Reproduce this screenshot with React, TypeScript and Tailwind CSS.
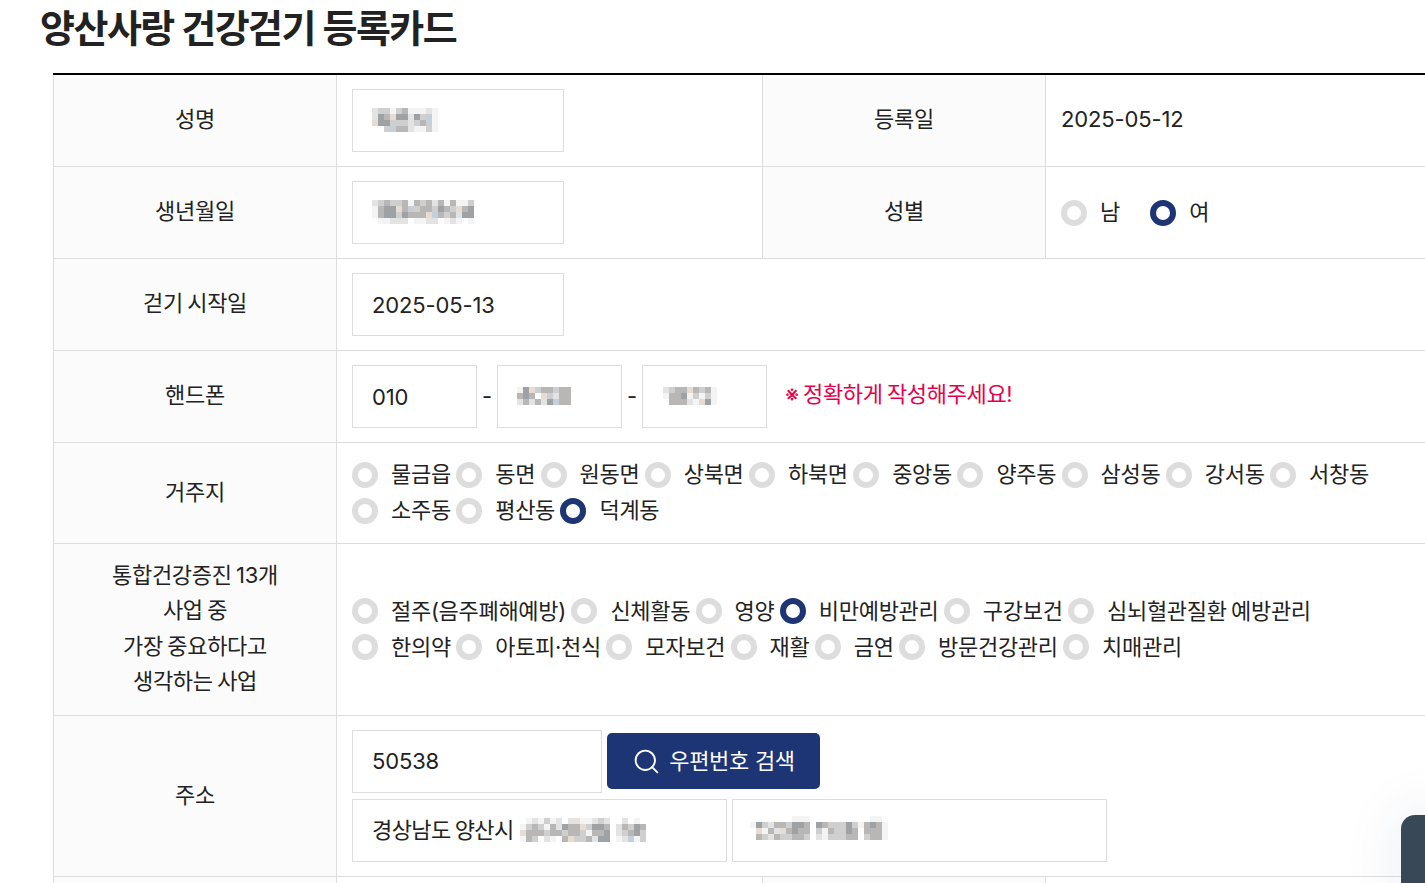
import { Search } from 'lucide-react';

const FONT = 'font-["Inter","Noto_Sans_CJK_KR",sans-serif]';

// 모자이크 처리된 개인정보: 한 글자가 칸 하나의 색
function Mosaic({ rows, className = '' }: { rows: string[]; className?: string }) {
  const size = 6;
  const tone: Record<string, string> = {
    '.': '#ffffff',
    a: '#f4f4f4',
    b: '#e3e3e3',
    c: '#cfcfcf',
    d: '#b8b7b6',
    e: '#9fa2a5',
    w: '#e6dcd2',
    u: '#c5ced9',
  };
  return (
    <svg width={rows[0].length * size} height={rows.length * size} className={`block shrink-0 ${className}`}>
      {rows.map((row, y) =>
        row.split('').map((ch, x) => (
          <rect key={`${x}-${y}`} x={x * size} y={y * size} width={size} height={size} fill={tone[ch]} />
        )),
      )}
    </svg>
  );
}

const nameMosaic = ['bccacdaaaba', 'bedweebecua', 'weecccbcdua', '..cuddbaaca'];
const birthMosaic = ['bcdccdadcdbdadaac', 'adeewducddcedcwde', 'adeecedddwudcdbee', '.aabbb.aabb.aba.a'];
const phoneMosaic2 = ['aewcddcdd', 'ded.wcbdd', 'bdbdbeudd'];
const phoneMosaic3 = ['bcddwdcda', 'addeacaca', '.dddbawea'];
const addrMosaic = [
  '.abacab.bbaabcb..b.a.',
  'acdcadbeddwceed.bdced',
  'wdddcddcddcadde.bcdec',
  'adc.ba.dwccdbee.abuac',
];
const addrMosaic2 = [
  '.......aaa..........aa.',
  'aecbddceed.edcccecadeda',
  '.wadbwdedd.cadcced.ddda',
  '.dcbdccddc.bacccdd.cdda',
];

function Radio({ checked = false }: { checked?: boolean }) {
  return (
    <span
      className={`block h-[26px] w-[26px] shrink-0 rounded-full border-[6.5px] bg-white ${
        checked ? 'border-[#1d3475]' : 'border-[#dddddd]'
      }`}
    />
  );
}

// 라디오 + 라벨. 원본처럼 라벨 뒤에 여백이 거의 없음
function Option({ label, checked }: { label: string; checked?: boolean }) {
  return (
    <label className="flex h-[26px] items-center gap-[13px] whitespace-nowrap">
      <Radio checked={checked} />
      <span className="pr-[5.4px]">{label}</span>
    </label>
  );
}

function Box({ className, children }: { className: string; children?: React.ReactNode }) {
  return (
    <div className={`flex h-[63px] items-center border border-[#dddddd] bg-white pl-[19px] ${className}`}>
      {children}
    </div>
  );
}

function Th({ children, className = '' }: { children: React.ReactNode; className?: string }) {
  return (
    <th className={`border border-[#dddddd] bg-[#fbfbfb] pb-px text-center align-middle font-normal ${className}`}>
      {children}
    </th>
  );
}

function Td({ children, colSpan }: { children?: React.ReactNode; colSpan?: number }) {
  return (
    <td colSpan={colSpan} className="border border-[#dddddd] px-[15px] align-middle">
      {children}
    </td>
  );
}

const districts = ['물금읍', '동면', '원동면', '상북면', '하북면', '중앙동', '양주동', '삼성동', '강서동', '서창동', '소주동', '평산동', '덕계동'];
const projects = ['절주(음주폐해예방)', '신체활동', '영양', '비만예방관리', '구강보건', '심뇌혈관질환 예방관리', '한의약', '아토피·천식', '모자보건', '재활', '금연', '방문건강관리', '치매관리'];

export default function App() {
  return (
    <div className={`relative h-[883px] overflow-hidden bg-white text-[22px] tracking-[-0.3px] text-[#222222] [word-spacing:-1.5px] ${FONT}`}>
      <h1 className="h-[73px] pl-10 pt-[3px] text-[38px] leading-[50px] font-bold tracking-[-0.04em] text-[#222222] [word-spacing:0]">
        양산사랑 건강걷기 등록카드
      </h1>

      <div className="ml-[53px] w-[1420px] border-t-2 border-black">
        <table className="w-full table-fixed border-collapse border-t-0 [&_tr:first-child>*]:border-t-0">
          <colgroup>
            <col className="w-[283px]" />
            <col className="w-[426px]" />
            <col className="w-[283px]" />
            <col />
          </colgroup>
          <tbody>
            <tr className="h-[91px]">
              <Th>성명</Th>
              <Td>
                <Box className="w-[212px]">
                  <Mosaic rows={nameMosaic} />
                </Box>
              </Td>
              <Th>등록일</Th>
              <Td>
                <span className="relative -top-px tracking-[-0.15px]">2025-05-12</span>
              </Td>
            </tr>
            <tr className="h-[92px]">
              <Th>생년월일</Th>
              <Td>
                <Box className="w-[212px]">
                  <Mosaic rows={birthMosaic} />
                </Box>
              </Td>
              <Th>성별</Th>
              <Td>
                <div className="flex gap-[25px] pt-px">
                  <Option label="남" />
                  <Option label="여" checked />
                </div>
              </Td>
            </tr>
            <tr className="h-[92px]">
              <Th>걷기 시작일</Th>
              <Td colSpan={3}>
                <Box className="w-[212px] pt-[3px] tracking-[-0.15px]">2025-05-13</Box>
              </Td>
            </tr>
            <tr className="h-[92px]">
              <Th>핸드폰</Th>
              <Td colSpan={3}>
                <div className="flex items-center">
                  <Box className="w-[125px] pt-[3px] tracking-[-0.15px]">010</Box>
                  <span className="w-[20px] text-center">-</span>
                  <Box className="w-[125px]">
                    <Mosaic rows={phoneMosaic2} />
                  </Box>
                  <span className="w-[20px] text-center">-</span>
                  <Box className="w-[125px]">
                    <Mosaic rows={phoneMosaic3} className="ml-px" />
                  </Box>
                  <span className="mb-[3px] ml-[18px] tracking-[-0.35px] text-[#e6004c]">※ 정확하게 작성해주세요!</span>
                </div>
              </Td>
            </tr>
            <tr className="h-[101px]">
              <Th>거주지</Th>
              <Td colSpan={3}>
                <div className="flex w-[1040px] flex-wrap gap-y-[10px]">
                  {districts.map((d) => (
                    <Option key={d} label={d} checked={d === '덕계동'} />
                  ))}
                </div>
              </Td>
            </tr>
            <tr className="h-[172px]">
              <Th className="leading-[35.5px]">
                통합건강증진 13개
                <br />
                사업 중
                <br />
                가장 중요하다고
                <br />
                생각하는 사업
              </Th>
              <Td colSpan={3}>
                <div className="flex w-[1040px] flex-wrap gap-y-[10px]">
                  {projects.map((p) => (
                    <Option key={p} label={p} checked={p === '비만예방관리'} />
                  ))}
                </div>
              </Td>
            </tr>
            <tr className="h-[161px]">
              <Th>주소</Th>
              <Td colSpan={3}>
                <div className="flex flex-col gap-[6px]">
                  <div className="flex items-center gap-[5px]">
                    <Box className="w-[250px] tracking-[-0.15px]">50538</Box>
                    <button className="flex h-[56px] w-[213px] items-center justify-center gap-[8px] rounded-[5px] bg-[#1d3475] text-white">
                      <Search size={29} strokeWidth={1.6} />
                      우편번호 검색
                    </button>
                  </div>
                  <div className="flex gap-[5px]">
                    <Box className="w-[375px] tracking-[-0.6px]">
                      경상남도 양산시
                      <Mosaic rows={addrMosaic} className="ml-[6px]" />
                    </Box>
                    <Box className="w-[375px]">
                      <Mosaic rows={addrMosaic2} className="-ml-[2px] mb-[4px]" />
                    </Box>
                  </div>
                </div>
              </Td>
            </tr>
            <tr className="h-[20px]">
              <Th>{''}</Th>
              <Td />
              <Th>{''}</Th>
              <Td />
            </tr>
          </tbody>
        </table>
      </div>

      {/* 우측 하단 플로팅 버튼 */}
      <div className="absolute top-[815px] left-[1401px] h-[90px] w-[60px] rounded-[14px] bg-[#394856] shadow-[0_0_60px_rgba(30,60,120,0.1)]" />
    </div>
  );
}
